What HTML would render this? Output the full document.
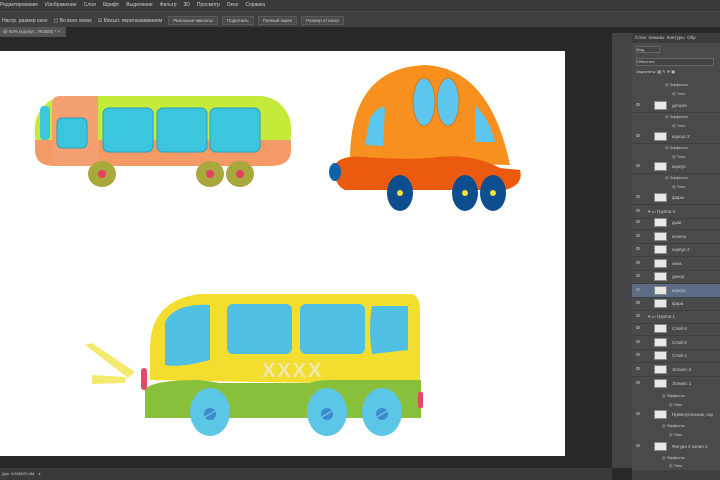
<!DOCTYPE html>
<html><head><meta charset="utf-8"><style>
*{margin:0;padding:0;box-sizing:border-box}
body{width:720px;height:480px;background:#282828;position:relative;overflow:hidden;font-family:"Liberation Sans",sans-serif;font-size:5px;color:#ccc}
.a{position:absolute}
.menu{left:0;top:0;width:720px;height:11px;background:#3a3a3a}
.menu span{margin-right:7px;font-size:5px;line-height:11px}
.opt{left:0;top:11px;width:720px;height:16px;background:#404040;border-top:1px solid #4a4a4a;padding:4px 0 0 2px}
.btn{display:inline-block;border:1px solid #5a5a5a;background:#4a4a4a;padding:1px 4px;margin-right:4px;font-size:4.5px}
.tab{left:0;top:27px;width:66px;height:10px;background:#535353;font-size:4.5px;padding:2px 3px}
.panel{left:632px;top:33px;width:88px;height:447px;background:#4a4a4a}
.tools{left:612px;top:33px;width:20px;height:435px;background:#444}
.row{position:absolute;left:632px;width:88px;height:14px;border-bottom:1px solid #3e3e3e;font-size:4.5px}
.th{position:absolute;left:22px;top:2px;width:13px;height:9px;background:#e8e8e8;border:1px solid #888}
.nm{position:absolute;left:40px;top:4px}
.ey{position:absolute;left:4px;top:4px;width:4px;height:3px;border:1px solid #999;border-radius:50%}
.sub{position:absolute;font-size:4px}
</style></head><body>
<div class="a menu"><span>Редактирование</span><span>Изображение</span><span>Слои</span><span>Шрифт</span><span>Выделение</span><span>Фильтр</span><span>3D</span><span>Просмотр</span><span>Окно</span><span>Справка</span></div>
<div class="a opt"><span style="margin-right:6px">Настр. размер окон</span><span style="margin-right:6px">▢ Во всех окнах</span><span style="margin-right:6px">☑ Масшт. перетаскиванием</span><span class="btn">Реальные пикселы</span><span class="btn">Подогнать</span><span class="btn">Полный экран</span><span class="btn">Размер оттиска</span></div>
<div class="a tab">@ 92% (корпус , RGB/8) * ×</div>
<div class="a" style="left:0;top:51px;width:565px;height:405px;background:#fff"></div>
<div class="a" style="left:0;top:468px;width:612px;height:12px;background:#3a3a3a;font-size:4px;padding:3px 2px">Док: 3,69M/22,4M &nbsp;&nbsp; ▸</div>
<svg class="a" style="left:0;top:0" width="612" height="480">
<rect x="35" y="96" width="256" height="70" rx="32" fill="#c4ea3a"/>
<path d="M35 140 H291 V150 Q291 166 270 166 H55 Q35 166 35 150Z" fill="#f39a66"/>
<path d="M60 96 H98 V166 H60 Q52 166 52 150 V104 Q52 96 60 96Z" fill="#f5a070"/>
<rect x="40" y="106" width="10" height="34" rx="4" fill="#3cc6de"/>
<rect x="57" y="118" width="30" height="30" rx="5" fill="#3cc6de" stroke="#2aa0b8"/>
<rect x="103" y="108" width="50" height="44" rx="6" fill="#3cc6de" stroke="#2aa0b8"/>
<rect x="157" y="108" width="50" height="44" rx="6" fill="#3cc6de" stroke="#2aa0b8"/>
<rect x="210" y="108" width="50" height="44" rx="6" fill="#3cc6de" stroke="#2aa0b8"/>
<ellipse cx="102" cy="174" rx="14" ry="13" fill="#a8a83c"/><circle cx="102" cy="174" r="4" fill="#e84060"/>
<ellipse cx="210" cy="174" rx="14" ry="13" fill="#a8a83c"/><circle cx="210" cy="174" r="4" fill="#e84060"/>
<ellipse cx="240" cy="174" rx="14" ry="13" fill="#a8a83c"/><circle cx="240" cy="174" r="4" fill="#e84060"/>
<path d="M350 160 Q350 68 425 65 Q490 68 510 165 Z" fill="#f7901e"/>
<path d="M335 165 Q340 155 365 157 Q400 160 430 158 Q470 152 500 168 L520 170 Q524 185 505 190 H345 Q333 185 335 165Z" fill="#ec5a0e"/>
<ellipse cx="335" cy="172" rx="6" ry="9" fill="#0d63a8"/>
<ellipse cx="424" cy="102" rx="11" ry="24" fill="#5cc6ee" stroke="#d77a18"/>
<ellipse cx="448" cy="102" rx="11" ry="24" fill="#5cc6ee" stroke="#d77a18"/>
<path d="M365 145 L370 118 Q380 104 385 108 L383 146Z" fill="#5cc6ee"/>
<path d="M475 105 Q490 120 495 142 H475Z" fill="#5cc6ee"/>
<ellipse cx="400" cy="193" rx="13" ry="18" fill="#0d4f8e"/><circle cx="400" cy="193" r="3" fill="#f5e23a"/>
<ellipse cx="465" cy="193" rx="13" ry="18" fill="#0d4f8e"/><circle cx="465" cy="193" r="3" fill="#f5e23a"/>
<ellipse cx="493" cy="193" rx="13" ry="18" fill="#0d4f8e"/><circle cx="493" cy="193" r="3" fill="#f5e23a"/>
<path d="M150 380 V345 Q152 300 200 294 H412 Q420 296 420 310 V385Z" fill="#f3de30"/>
<path d="M145 390 Q150 380 200 380 L220 383 H310 Q315 380 330 380 H421 V418 H145Z" fill="#88c03c"/>
<path d="M165 322 Q175 303 210 305 V360 Q180 368 165 365Z" fill="#4fc0e4"/>
<rect x="227" y="304" width="65" height="50" rx="6" fill="#4fc0e4"/>
<rect x="300" y="304" width="65" height="50" rx="6" fill="#4fc0e4"/>
<path d="M372 306 H408 V350 Q390 352 372 354 Q368 330 372 306Z" fill="#4fc0e4"/>
<text x="262" y="377" font-family="Liberation Sans" font-size="20" font-weight="bold" fill="#f0e8b0" letter-spacing="2">XXXX</text>
<ellipse cx="210" cy="412" rx="20" ry="24" fill="#5bc6e6"/><circle cx="210" cy="414" r="6" fill="#3a8cd0"/><line x1="205" y1="417" x2="215" y2="411" stroke="#8fd4ee"/>
<ellipse cx="327" cy="412" rx="20" ry="24" fill="#5bc6e6"/><circle cx="327" cy="414" r="6" fill="#3a8cd0"/><line x1="322" y1="417" x2="332" y2="411" stroke="#8fd4ee"/>
<ellipse cx="382" cy="412" rx="20" ry="24" fill="#5bc6e6"/><circle cx="382" cy="414" r="6" fill="#3a8cd0"/><line x1="377" y1="417" x2="387" y2="411" stroke="#8fd4ee"/>
<path d="M85 345 L92 343 L135 372 L128 378Z" fill="#f5ea70"/>
<path d="M92 375 L126 377 L125 383 L92 384Z" fill="#f5ea70"/>
<rect x="141" y="368" width="6" height="22" rx="3" fill="#e24a6a"/>
<rect x="418" y="392" width="5" height="16" rx="2" fill="#e24a6a"/>
</svg>
<div class="a tools"></div>
<div class="a panel"></div>
<div class="a" style="left:632px;top:33px;width:88px;height:10px;background:#3c3c3c;font-size:4.5px;padding:2px 3px">Слои &nbsp;Каналы &nbsp;Контуры &nbsp;Обр</div>
<div class="a" style="left:636px;top:46px;width:24px;height:7px;background:#444;border:1px solid #666;font-size:4px">Вид</div>
<div class="a" style="left:636px;top:58px;width:78px;height:8px;background:#444;border:1px solid #666;font-size:4px">Обычные</div>
<div class="a" style="left:636px;top:69px;font-size:4px">Закрепить: ▦ ✎ ✣ ▣</div>
<div class="sub a" style="left:665px;top:82px">◎ Эффекты</div><div class="sub a" style="left:672px;top:91px">◎ Тень</div>
<div class="row" style="top:99px"><div class="ey"></div><div class="th"></div><div class="nm">детали</div></div>
<div class="sub a" style="left:665px;top:114px">◎ Эффекты</div><div class="sub a" style="left:672px;top:123px">◎ Тень</div>
<div class="row" style="top:130px"><div class="ey"></div><div class="th"></div><div class="nm">корпус 2</div></div>
<div class="sub a" style="left:665px;top:145px">◎ Эффекты</div><div class="sub a" style="left:672px;top:154px">◎ Тень</div>
<div class="row" style="top:160px"><div class="ey"></div><div class="th"></div><div class="nm">корпус</div></div>
<div class="sub a" style="left:665px;top:175px">◎ Эффекты</div><div class="sub a" style="left:672px;top:184px">◎ Тень</div>
<div class="row" style="top:191px"><div class="ey"></div><div class="th"></div><div class="nm">фары</div></div>
<div class="row" style="top:205px"><div class="ey"></div><div class="nm" style="left:16px">▾ ▭ Группа 4</div></div>
<div class="row" style="top:216px"><div class="ey"></div><div class="th"></div><div class="nm">дым</div></div>
<div class="row" style="top:230px"><div class="ey"></div><div class="th"></div><div class="nm">колеса</div></div>
<div class="row" style="top:243px"><div class="ey"></div><div class="th"></div><div class="nm">корпус 2</div></div>
<div class="row" style="top:257px"><div class="ey"></div><div class="th"></div><div class="nm">окна</div></div>
<div class="row" style="top:270px"><div class="ey"></div><div class="th"></div><div class="nm">декор</div></div>
<div class="row" style="top:284px;background:#5d6c84"><div class="ey"></div><div class="th"></div><div class="nm">корпус</div></div>
<div class="row" style="top:297px"><div class="ey"></div><div class="th"></div><div class="nm">фара</div></div>
<div class="row" style="top:310px"><div class="ey"></div><div class="nm" style="left:16px">▾ ▭ Группа 1</div></div>
<div class="row" style="top:322px"><div class="ey"></div><div class="th"></div><div class="nm">Слой 6</div></div>
<div class="row" style="top:336px"><div class="ey"></div><div class="th"></div><div class="nm">Слой 5</div></div>
<div class="row" style="top:349px"><div class="ey"></div><div class="th"></div><div class="nm">Слой 4</div></div>
<div class="row" style="top:363px"><div class="ey"></div><div class="th"></div><div class="nm">Эллипс 2</div></div>
<div class="row" style="top:377px;border:none"><div class="ey"></div><div class="th"></div><div class="nm">Эллипс 1</div></div>
<div class="sub a" style="left:662px;top:393px">◎ Эффекты</div><div class="sub a" style="left:669px;top:402px">◎ Тень</div>
<div class="row" style="top:408px;border:none"><div class="ey"></div><div class="th"></div><div class="nm">Прямоугольник, скр</div></div>
<div class="sub a" style="left:662px;top:423px">◎ Эффекты</div><div class="sub a" style="left:669px;top:432px">◎ Тень</div>
<div class="row" style="top:440px;border:none"><div class="ey"></div><div class="th"></div><div class="nm">Фигура 2 копия 2</div></div>
<div class="sub a" style="left:662px;top:455px">◎ Эффекты</div><div class="sub a" style="left:669px;top:463px">◎ Тень</div>
<div class="a" style="left:632px;top:470px;width:88px;height:10px;background:#404040"></div>
</body></html>
